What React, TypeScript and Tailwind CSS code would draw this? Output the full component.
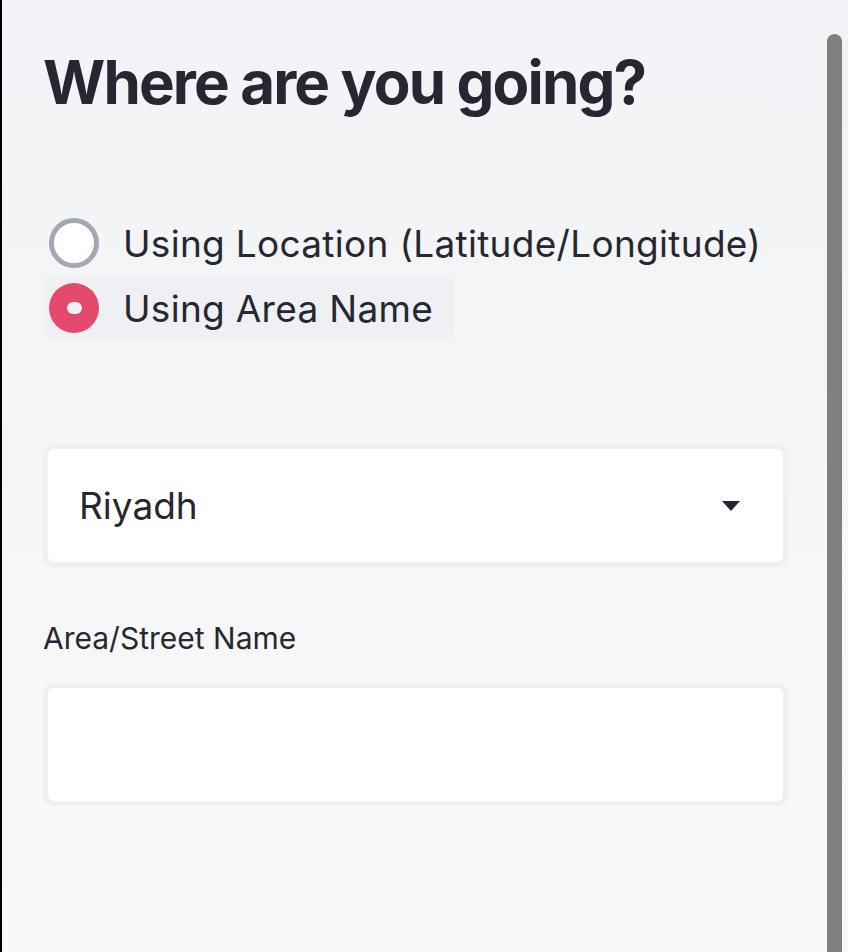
const font = "font-['Inter','Noto_Sans',sans-serif]";

function Radio({ label, checked }: { label: string; checked?: boolean }) {
  return (
    <div
      className={`flex h-[62px] w-fit items-center gap-[24px] rounded-lg pl-[6px] pr-[21px] ${
        checked ? "bg-[#eff0f4]" : ""
      }`}
    >
      {checked ? (
        <span className="flex h-[50px] w-[50px] items-center justify-center rounded-full bg-[#e5496b]">
          <span className="h-[12px] w-[15px] rounded-full bg-[#f0f1f4]" />
        </span>
      ) : (
        <span className="h-[50px] w-[50px] rounded-full border-[5px] border-[#a4a8b2] bg-white" />
      )}
      <span className="text-[37px] leading-none tracking-[0.3px] text-[#262730]">{label}</span>
    </div>
  );
}

function Field({ children }: { children?: React.ReactNode }) {
  return (
    <div className="h-[123px] w-[745px] rounded-[10px] bg-[#eff0f4] p-[5px]">
      <div className="flex h-full items-center rounded-[6px] bg-white pl-[31px] pr-[42px]">
        {children}
      </div>
    </div>
  );
}

export default function App() {
  return (
    <div className={`flex h-[952px] w-[848px] ${font}`}>
      <div className="w-[2px] bg-black" />
      <div className="flex flex-1 bg-gradient-to-b from-[#f2f3f6] to-[#f9f9f9]">
        <div className="flex-1 pl-[41px]">
          <h1 className="mt-[52px] text-[60px] font-bold leading-none tracking-[-1.85px] text-[#262730]">
            Where are you going?
          </h1>
          <div className="mt-[100px] flex flex-col gap-[3px]">
            <Radio label="Using Location (Latitude/Longitude)" />
            <Radio label="Using Area Name" checked />
          </div>
          <div className="mt-[105px]">
            <Field>
              <span className="flex-1 text-[37px] text-[#262730]">Riyadh</span>
              <svg width="20" height="10" viewBox="0 0 20 10">
                <path d="M1 0 H19 L10 10 Z" fill="#262730" />
              </svg>
            </Field>
          </div>
          <div className="mt-[56px] text-[30px] leading-none text-[#262730]">Area/Street Name</div>
          <div className="mt-[30px]">
            <Field />
          </div>
        </div>
        <div className="flex w-[21px] flex-col items-start pt-[34px]">
          <div className="h-full w-[15px] rounded-t-full bg-[#7f7f7f]" />
        </div>
      </div>
    </div>
  );
}
